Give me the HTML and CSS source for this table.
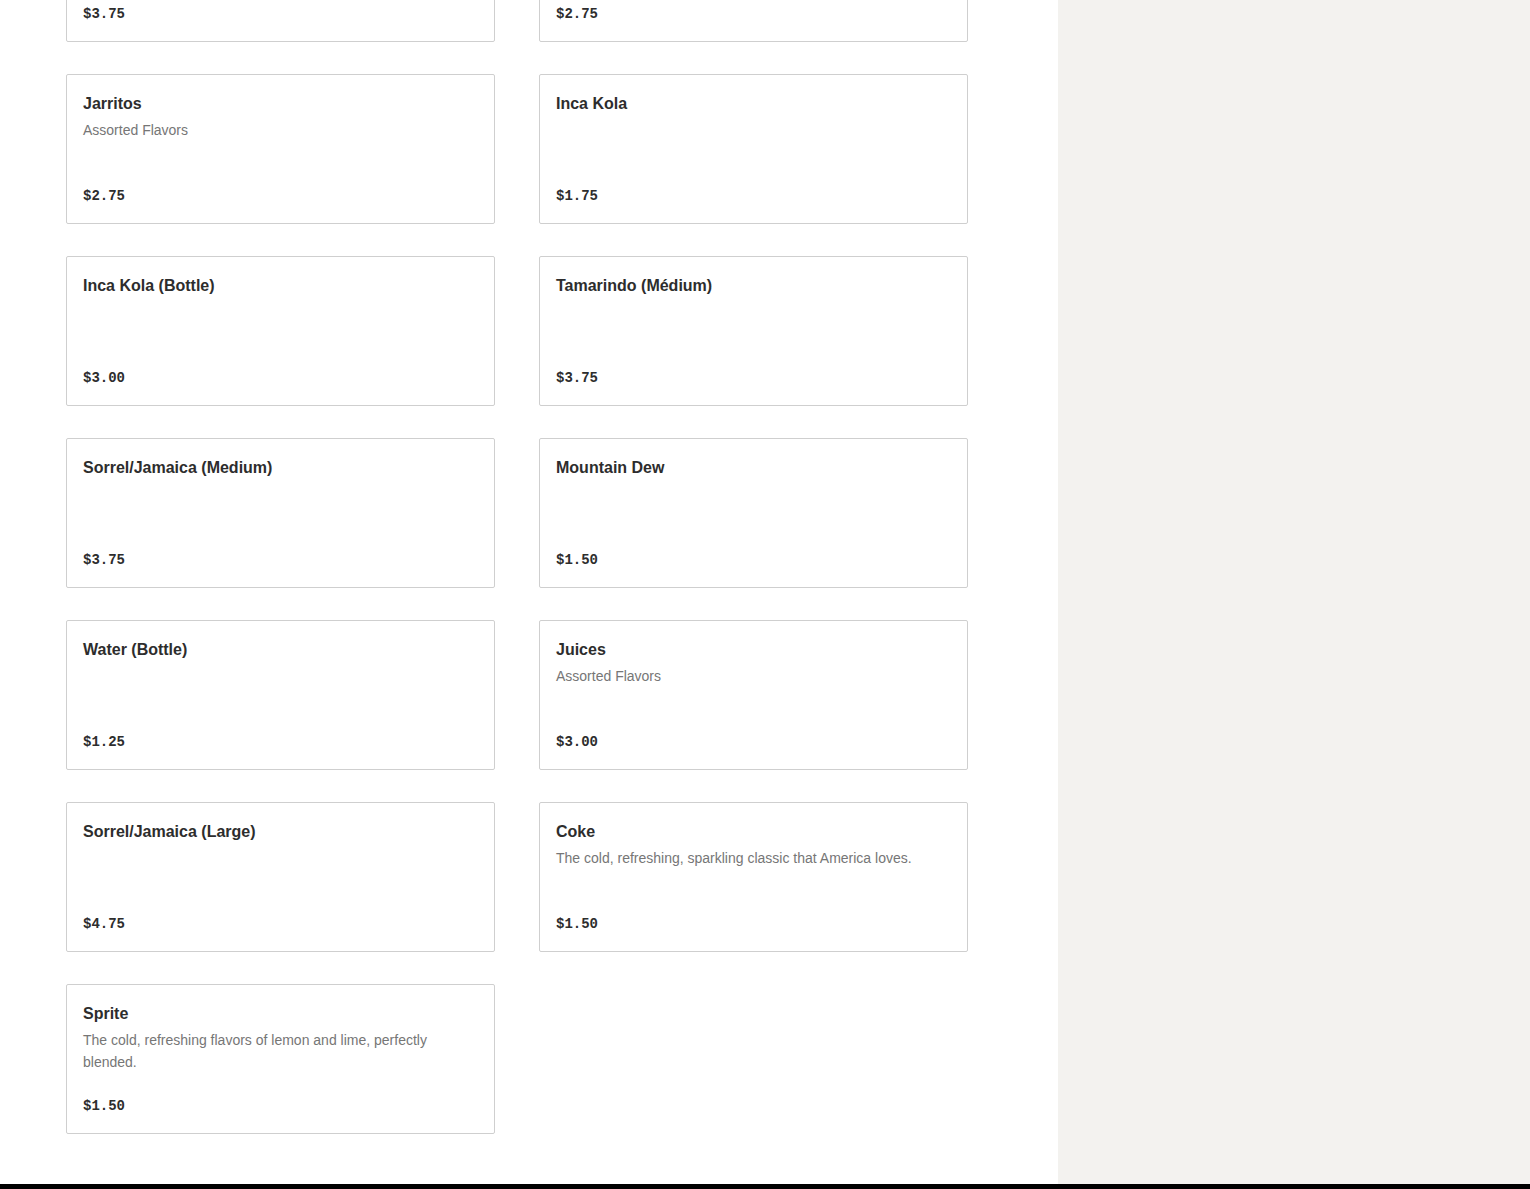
FILE: index.html
```html
<!DOCTYPE html>
<html>

<head>
  <title>Drinks</title>
  <link rel="stylesheet" href="styles.css">
</head>

<body>
  <div class="page">
    <main class="menu">
      <div class="menu-grid">
        <div class="item">
          <p class="item-price">$3.75</p>
        </div>
        <div class="item">
          <p class="item-price">$2.75</p>
        </div>

        <div class="item">
          <h4 class="item-name">Jarritos</h4>
          <p class="item-desc">Assorted Flavors</p>
          <p class="item-price">$2.75</p>
        </div>
        <div class="item">
          <h4 class="item-name">Inca Kola</h4>
          <p class="item-price">$1.75</p>
        </div>

        <div class="item">
          <h4 class="item-name">Inca Kola (Bottle)</h4>
          <p class="item-price">$3.00</p>
        </div>
        <div class="item">
          <h4 class="item-name">Tamarindo (Médium)</h4>
          <p class="item-price">$3.75</p>
        </div>

        <div class="item">
          <h4 class="item-name">Sorrel/Jamaica (Medium)</h4>
          <p class="item-price">$3.75</p>
        </div>
        <div class="item">
          <h4 class="item-name">Mountain Dew</h4>
          <p class="item-price">$1.50</p>
        </div>

        <div class="item">
          <h4 class="item-name">Water (Bottle)</h4>
          <p class="item-price">$1.25</p>
        </div>
        <div class="item">
          <h4 class="item-name">Juices</h4>
          <p class="item-desc">Assorted Flavors</p>
          <p class="item-price">$3.00</p>
        </div>

        <div class="item">
          <h4 class="item-name">Sorrel/Jamaica (Large)</h4>
          <p class="item-price">$4.75</p>
        </div>
        <div class="item">
          <h4 class="item-name">Coke</h4>
          <p class="item-desc">The cold, refreshing, sparkling classic that America loves.</p>
          <p class="item-price">$1.50</p>
        </div>

        <div class="item">
          <h4 class="item-name">Sprite</h4>
          <p class="item-desc">The cold, refreshing flavors of lemon and lime, perfectly blended.</p>
          <p class="item-price">$1.50</p>
        </div>
      </div>
    </main>

    <aside class="sidebar"></aside>
  </div>

  <footer class="footer"></footer>
</body>

</html>
```

FILE: styles.css
```css
body {
  margin: 0;
  font-family: "Liberation Sans", Arial, sans-serif;
  color: #2d2d2d;
  background-color: #ffffff;
}

.page {
  display: flex;
}

/* Lista de productos */
.menu {
  width: 1058px;
  padding: 0 0 50px 66px;
  box-sizing: border-box;
}

.menu-grid {
  display: grid;
  grid-template-columns: 429px 429px;
  column-gap: 44px;
  row-gap: 32px;
  /* la pagina esta desplazada hacia abajo */
  margin-top: -108px;
}

.item {
  display: flex;
  flex-direction: column;
  min-height: 150px;
  box-sizing: border-box;
  padding: 17px 16px 15px;
  border: 1px solid #cfcfcf;
  border-radius: 2px;
}

.item-name {
  margin: 0;
  font-size: 16px;
  line-height: 24px;
  font-weight: bold;
  color: #2d2d2d;
}

.item-desc {
  margin: 3px 0 0;
  font-size: 14px;
  line-height: 22px;
  color: #767676;
}

.item-price {
  margin: auto 0 0;
  padding-top: 16px;
  font-family: "Liberation Mono", "Courier New", monospace;
  font-size: 14px;
  line-height: 24px;
  font-weight: bold;
  color: #2d2d2d;
}

/* Panel lateral */
.sidebar {
  flex: 1;
  background-color: #f3f2ef;
}

.footer {
  height: 200px;
  background-color: #000000;
}
```
